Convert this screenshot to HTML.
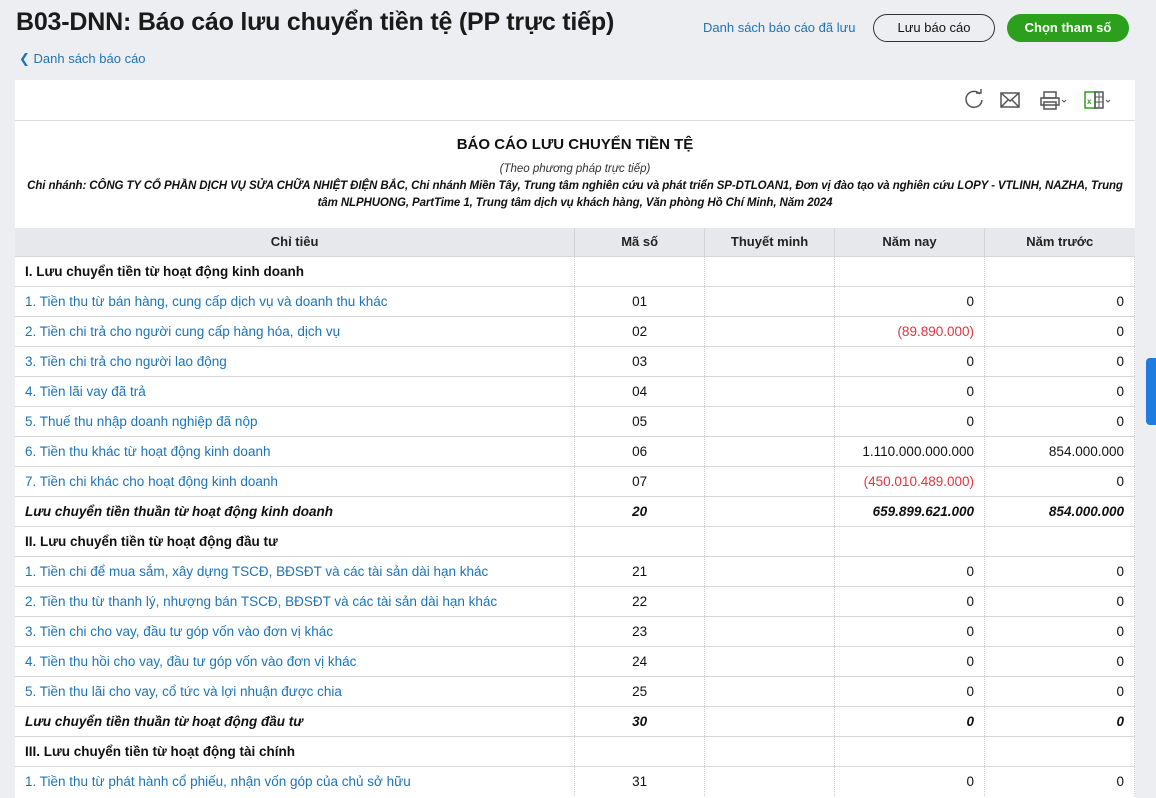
<!DOCTYPE html>
<html><head><meta charset="utf-8"><style>
*{box-sizing:border-box;margin:0;padding:0}
body{width:1156px;height:798px;overflow:hidden;background:#eceef2;font-family:"Liberation Sans","DejaVu Sans",sans-serif;position:relative;color:#111}
h1{position:absolute;left:16px;top:8px;font-size:25px;font-weight:bold;color:#1a1a1a;letter-spacing:-0.2px}
.back{position:absolute;left:19px;top:51px;font-size:13px;color:#1f73b7}
.saved{position:absolute;left:703px;top:20px;font-size:13px;color:#1f73b7}
.btn1{position:absolute;left:873px;top:14px;width:122px;height:28px;border:1.5px solid #333;border-radius:14px;font-size:13px;text-align:center;line-height:25px}
.btn2{position:absolute;left:1007px;top:14px;width:122px;height:28px;border-radius:14px;background:#2ca01c;color:#fff;font-weight:bold;font-size:13px;text-align:center;line-height:28px}
.panel{position:absolute;left:15px;top:80px;width:1120px;height:718px;background:#fff}
.tb{height:41px;border-bottom:1px solid #ddd;position:relative}
.rt{text-align:center}
.t1{font-size:15px;font-weight:bold;margin-top:15px}
.t2{font-size:11.5px;font-style:italic;color:#333;margin-top:10px}
.t3{font-size:11.5px;font-style:italic;font-weight:bold;margin-top:3px;line-height:17px;white-space:nowrap;letter-spacing:-0.1px}
table{position:absolute;left:0;top:148px;width:1120px;border-collapse:collapse;font-size:13.5px}
th{background:#e6e8ec;height:28px;font-weight:bold;font-size:13px;color:#222;border-right:1px solid #d4d4d4}
td{height:30px;border-top:1px solid #d8d8d8;border-right:1px dotted #ccc;padding:0 10px}
td:first-child{color:#1f73b7}
td:nth-child(2){text-align:center}
td:nth-child(4),td:nth-child(5){text-align:right}
tr.h td{color:#111;font-weight:bold}
tr.s td{color:#111;font-weight:bold;font-style:italic}
.neg{color:#e0343f}
.tab{position:absolute;left:1146px;top:358px;width:12px;height:67px;background:#1e7be0;border-radius:4px 0 0 4px}
</style></head><body>
<h1>B03-DNN: Báo cáo lưu chuyển tiền tệ (PP trực tiếp)</h1>
<div class="back">&#10094; Danh sách báo cáo</div>
<div class="saved">Danh sách báo cáo đã lưu</div>
<div class="btn1">Lưu báo cáo</div>
<div class="btn2">Chọn tham số</div>
<div class="panel">
<div class="tb">
<svg style="position:absolute;left:948px;top:9px" width="160" height="22" viewBox="0 0 160 22" fill="none" stroke="#555" stroke-width="1.5">
<path d="M17 5 A8 8 0 1 0 19 11"/><path d="M13 4 L18 4 L18 0" />
<rect x="38" y="4" width="18" height="14"/><path d="M38 4 L47 12 L56 4 M38 18 L45 11 M56 18 L49 11"/>
<rect x="78" y="9" width="18" height="7"/><rect x="81" y="3" width="12" height="6"/><rect x="81" y="13" width="12" height="7"/><path d="M99 11 l2 2 l2 -2" stroke-width="1"/>
<rect x="122" y="3" width="10" height="16" stroke="#2ca01c"/><text x="124" y="15" font-size="8" fill="#2ca01c" stroke="none" font-weight="bold">x</text><rect x="132" y="3" width="8" height="16"/><path d="M132 8h8M132 13h8M136 3v16" stroke-width="1"/><path d="M143 11 l2 2 l2 -2" stroke-width="1"/>
</svg>
</div>
<div class="rt">
<div class="t1">BÁO CÁO LƯU CHUYỂN TIỀN TỆ</div>
<div class="t2">(Theo phương pháp trực tiếp)</div>
<div class="t3">Chi nhánh: CÔNG TY CỔ PHẦN DỊCH VỤ SỬA CHỮA NHIỆT ĐIỆN BẮC, Chi nhánh Miền Tây, Trung tâm nghiên cứu và phát triển SP-DTLOAN1, Đơn vị đào tạo và nghiên cứu LOPY - VTLINH, NAZHA, Trung<br>tâm NLPHUONG, PartTime 1, Trung tâm dịch vụ khách hàng, Văn phòng Hồ Chí Minh, Năm 2024</div>
</div>
<table>
<tr><th style="width:560px">Chỉ tiêu</th><th style="width:130px">Mã số</th><th style="width:130px">Thuyết minh</th><th style="width:150px">Năm nay</th><th style="width:150px;border-right:0">Năm trước</th></tr>
<tr class="h"><td>I. Lưu chuyển tiền từ hoạt động kinh doanh</td><td></td><td></td><td></td><td></td></tr>
<tr><td>1. Tiền thu từ bán hàng, cung cấp dịch vụ và doanh thu khác</td><td>01</td><td></td><td>0</td><td>0</td></tr>
<tr><td>2. Tiền chi trả cho người cung cấp hàng hóa, dịch vụ</td><td>02</td><td></td><td class="neg">(89.890.000)</td><td>0</td></tr>
<tr><td>3. Tiền chi trả cho người lao động</td><td>03</td><td></td><td>0</td><td>0</td></tr>
<tr><td>4. Tiền lãi vay đã trả</td><td>04</td><td></td><td>0</td><td>0</td></tr>
<tr><td>5. Thuế thu nhập doanh nghiệp đã nộp</td><td>05</td><td></td><td>0</td><td>0</td></tr>
<tr><td>6. Tiền thu khác từ hoạt động kinh doanh</td><td>06</td><td></td><td>1.110.000.000.000</td><td>854.000.000</td></tr>
<tr><td>7. Tiền chi khác cho hoạt động kinh doanh</td><td>07</td><td></td><td class="neg">(450.010.489.000)</td><td>0</td></tr>
<tr class="s"><td>Lưu chuyển tiền thuần từ hoạt động kinh doanh</td><td>20</td><td></td><td>659.899.621.000</td><td>854.000.000</td></tr>
<tr class="h"><td>II. Lưu chuyển tiền từ hoạt động đầu tư</td><td></td><td></td><td></td><td></td></tr>
<tr><td>1. Tiền chi để mua sắm, xây dựng TSCĐ, BĐSĐT và các tài sản dài hạn khác</td><td>21</td><td></td><td>0</td><td>0</td></tr>
<tr><td>2. Tiền thu từ thanh lý, nhượng bán TSCĐ, BĐSĐT và các tài sản dài hạn khác</td><td>22</td><td></td><td>0</td><td>0</td></tr>
<tr><td>3. Tiền chi cho vay, đầu tư góp vốn vào đơn vị khác</td><td>23</td><td></td><td>0</td><td>0</td></tr>
<tr><td>4. Tiền thu hồi cho vay, đầu tư góp vốn vào đơn vị khác</td><td>24</td><td></td><td>0</td><td>0</td></tr>
<tr><td>5. Tiền thu lãi cho vay, cổ tức và lợi nhuận được chia</td><td>25</td><td></td><td>0</td><td>0</td></tr>
<tr class="s"><td>Lưu chuyển tiền thuần từ hoạt động đầu tư</td><td>30</td><td></td><td>0</td><td>0</td></tr>
<tr class="h"><td>III. Lưu chuyển tiền từ hoạt động tài chính</td><td></td><td></td><td></td><td></td></tr>
<tr><td>1. Tiền thu từ phát hành cổ phiếu, nhận vốn góp của chủ sở hữu</td><td>31</td><td></td><td>0</td><td>0</td></tr>
</table>
</div>
<div class="tab"></div>
</body></html>
